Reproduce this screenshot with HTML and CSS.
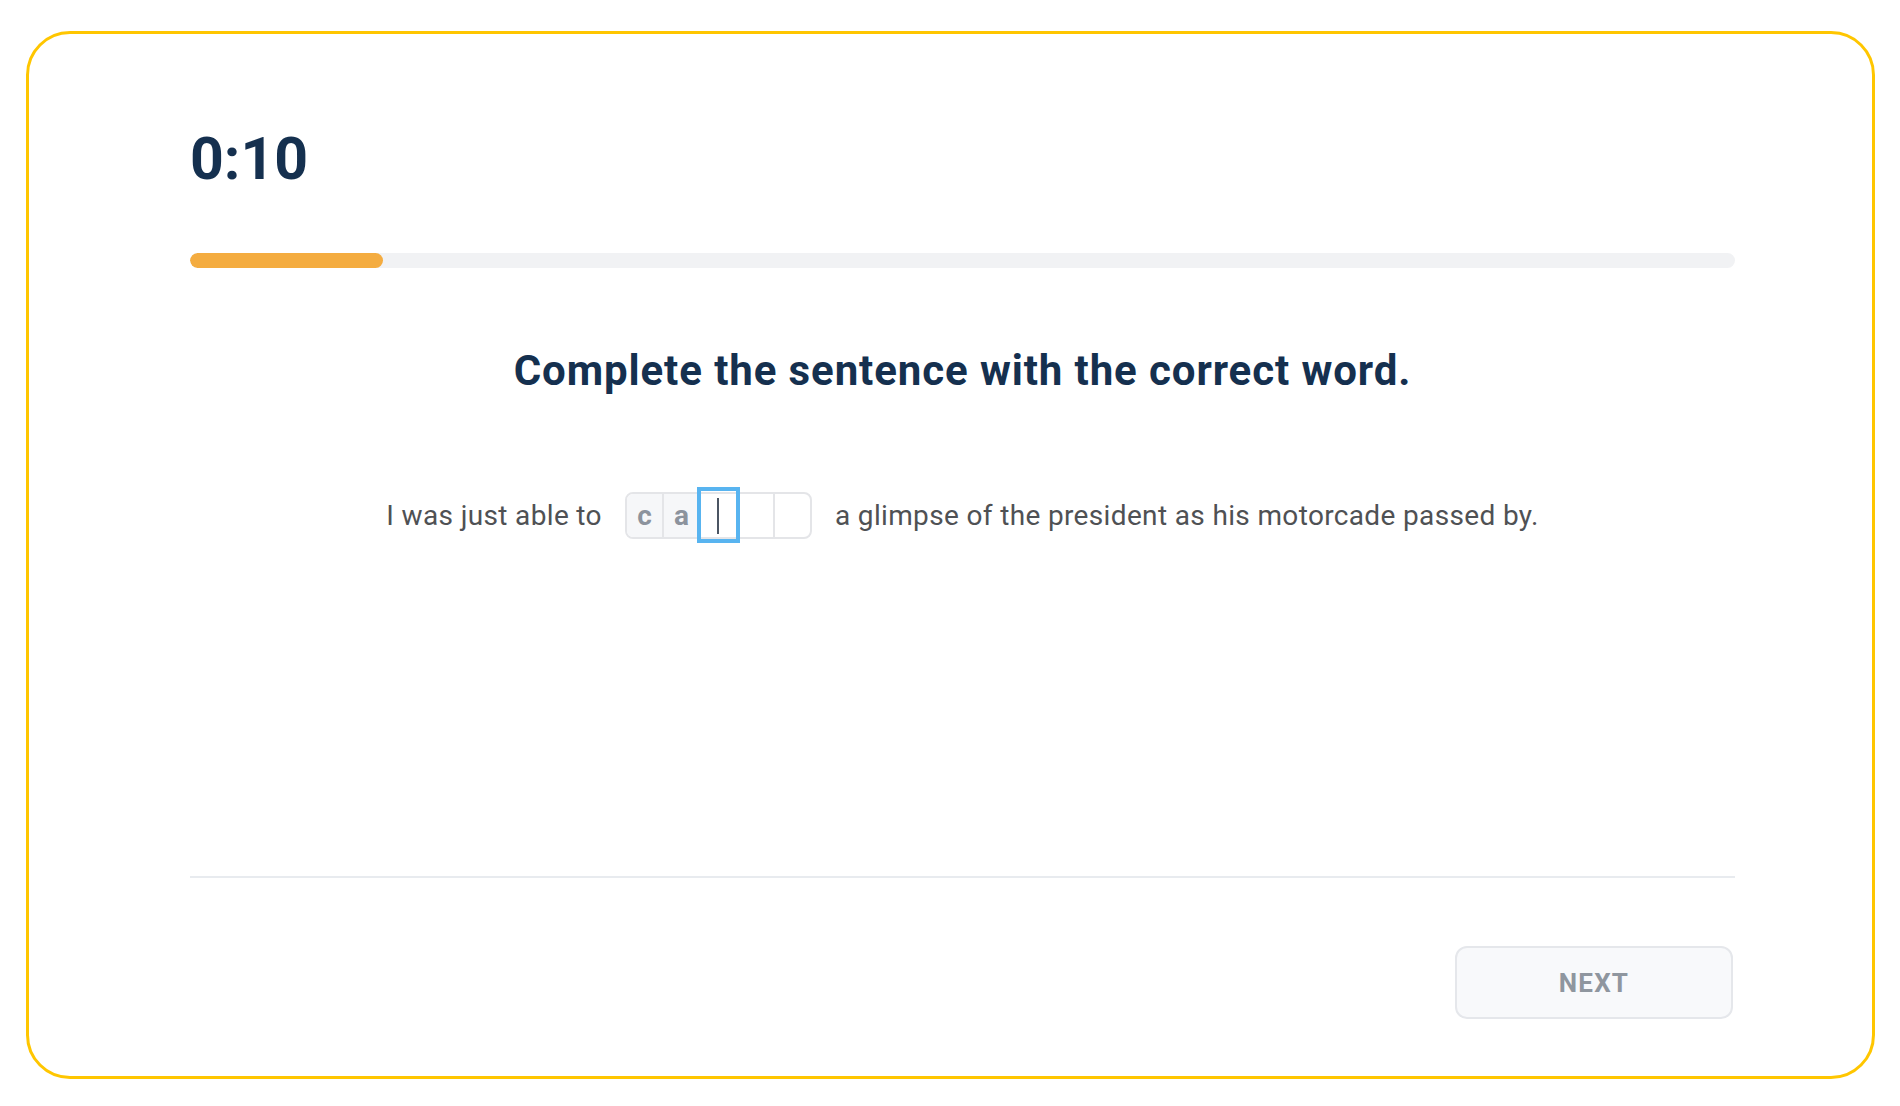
FILE: index.html
```html
<!DOCTYPE html>
<html lang="en">
<head>
<meta charset="utf-8">
<title>Quiz</title>
<link rel="stylesheet" href="styles.css">
</head>
<body>
<main class="card">
  <div class="timer">0:10</div>
  <div class="progress"><div class="progress-fill" style="width:12.5%"></div></div>
  <h1 class="prompt">Complete the sentence with the correct word.</h1>
  <div class="sentence">
    <span class="text">I was just able to</span>
    <span class="word">
      <span class="cell filled">c</span>
      <span class="cell filled">a</span>
      <span class="cell focus"><span class="caret"></span></span>
      <span class="cell"></span>
      <span class="cell last"></span>
    </span>
    <span class="text">a glimpse of the president as his motorcade passed by.</span>
  </div>
  <div class="divider"></div>
  <div class="footer">
    <button class="next">NEXT</button>
  </div>
</main>
</body>
</html>
```

FILE: styles.css
```css
html, body {
  margin: 0;
  padding: 0;
  background: #ffffff;
}
body {
  font-family: Roboto, "Liberation Sans", Arial, sans-serif;
}
.card {
  box-sizing: border-box;
  margin: 31px 0 0 26px;
  width: 1849px;
  height: 1048px;
  border: 3px solid #ffc600;
  border-radius: 44px;
  padding: 90px 137px 57px 161px;
  display: flex;
  flex-direction: column;
}
.timer {
  font-size: 59px;
  font-weight: 700;
  line-height: 70px;
  color: #15304f;
  letter-spacing: 0;
}
.progress {
  margin-top: 59px;
  height: 15px;
  border-radius: 8px;
  background: #f1f2f4;
  overflow: hidden;
}
.progress-fill {
  height: 100%;
  border-radius: 8px;
  background: #f4ac40;
}
.prompt {
  margin: 78px 0 0 0;
  font-size: 42px;
  font-weight: 700;
  line-height: 50px;
  color: #15304f;
  text-align: center;
  letter-spacing: 0.9px;
}
.sentence {
  margin-top: 96px;
  display: flex;
  justify-content: center;
  align-items: center;
  gap: 23px;
}
.text {
  font-size: 28px;
  line-height: 34px;
  color: #4f5154;
  letter-spacing: 0.35px;
}
.word {
  display: inline-flex;
  height: 47px;
  box-sizing: border-box;
  border: 2px solid #e4e5e8;
  border-radius: 8px;
}
.cell {
  position: relative;
  width: 35px;
  border-right: 2px solid #e4e5e8;
  display: flex;
  align-items: center;
  justify-content: center;
  font-size: 28px;
  font-weight: 700;
  color: #8c939d;
}
.cell.last {
  border-right: none;
}
.cell.filled {
  background: #f6f7f9;
}
.cell.filled:first-child {
  border-radius: 6px 0 0 6px;
}
.cell.focus::after {
  content: "";
  position: absolute;
  left: -4px;
  right: -4px;
  top: -7px;
  bottom: -6px;
  border: 4px solid #58b4f0;
}
.caret {
  width: 2px;
  height: 36px;
  background: #4b5563;
}
.divider {
  margin-top: auto;
  height: 2px;
  background: #e8ebef;
}
.footer {
  padding-top: 68px;
  display: flex;
  justify-content: flex-end;
}
.next {
  margin-right: 2px;
  width: 278px;
  height: 73px;
  box-sizing: border-box;
  border: 2px solid #e5e7eb;
  border-radius: 12px;
  background: #f8f9fb;
  font-family: Roboto, "Liberation Sans", Arial, sans-serif;
  font-size: 26px;
  font-weight: 700;
  letter-spacing: 1.2px;
  color: #8f969f;
  padding: 0;
}
```
